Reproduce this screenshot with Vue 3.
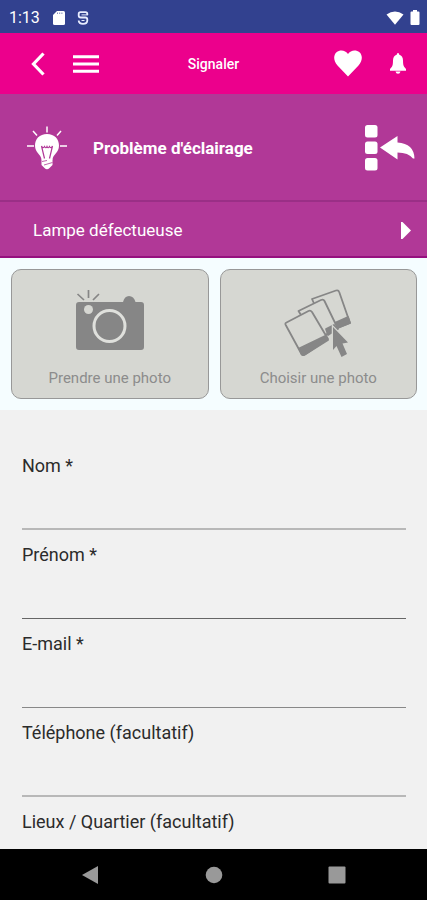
<script setup>
import { reactive } from 'vue'

const fields = [
  { id: 'nom', label: 'Nom *', type: 'text', tone: 'soft' },
  { id: 'prenom', label: 'Prénom *', type: 'text', tone: 'strong' },
  { id: 'email', label: 'E-mail *', type: 'email', tone: 'medium' },
  { id: 'telephone', label: 'Téléphone (facultatif)', type: 'tel', tone: 'soft' },
  { id: 'lieu', label: 'Lieux / Quartier (facultatif)', type: 'text', tone: 'strong' },
]

const values = reactive({ nom: '', prenom: '', email: '', telephone: '', lieu: '' })
</script>

<template>
  <div class="screen">
    <div class="status">
      <span class="clock">1:13</span>
      <svg class="sd" width="12" height="14" viewBox="0 0 12 14">
        <path d="M4 0H10.500Q12 0 12 1.500V12.500Q12 14 10.500 14H1.500Q0 14 0 12.500V4Z" fill="#fff" />
        <path d="M4.500 1.500V3M6.700 1.500V3M8.900 1.500V3" stroke="#32418f" stroke-width="1" opacity=".6" />
      </svg>
      <svg class="sync" width="12" height="14" viewBox="0 0 12 14">
        <path d="M10.300 4V3Q10.300 1.200 8.500 1.200H3.500Q1.700 1.200 1.700 3V4.500Q1.700 6.500 3.700 6.500H8.300Q10.300 6.500 10.300 8.500V9.500Q10.300 12.800 6 12.800Q1.700 12.800 1.700 9.500" fill="none" stroke="#e9edff" stroke-width="1.800" />
        <path d="M4.500 9.500H7.500M4.500 3.900H11" stroke="#e9edff" stroke-width="1" />
      </svg>
      <span class="spacer"></span>
      <svg class="wifi" width="18" height="14" viewBox="0 0 18 14">
        <path d="M.500 3.500Q9-2.500 17.500 3.500L9 13.800Z" fill="#fff" />
      </svg>
      <svg width="10" height="15" viewBox="0 0 10 15">
        <path d="M3 0H7V1.500H8.500Q9.500 1.500 9.500 2.500V14Q9.500 15 8.500 15H1.500Q.500 15 .500 14V2.500Q.500 1.500 1.500 1.500H3Z" fill="#fff" />
      </svg>
    </div>

    <header class="bar">
      <div class="side start">
        <button class="icon-btn" type="button" aria-label="Retour">
          <svg width="14" height="24" viewBox="0 0 14 24">
            <path d="M12.500 1.500L2.500 12L12.500 22.500" fill="none" stroke="#fff" stroke-width="3.200" />
          </svg>
        </button>
        <button class="icon-btn" type="button" aria-label="Menu">
          <svg width="26" height="18" viewBox="0 0 26 18">
            <path d="M0 1.700H26M0 9H26M0 16.300H26" stroke="#fff" stroke-width="3" />
          </svg>
        </button>
      </div>
      <h1 class="title">Signaler</h1>
      <div class="side end">
        <button class="icon-btn" type="button" aria-label="Favoris">
          <svg width="28" height="27" viewBox="0 0 28 27">
            <path d="M14 26.500L3.500 15.500C-1 10.500-.500 5 2.500 2.300C6-.800 11.500 0 14 4C16.500 0 22-.800 25.500 2.300C28.500 5 29 10.500 24.500 15.500Z" fill="#fff" />
          </svg>
        </button>
        <button class="icon-btn" type="button" aria-label="Notifications">
          <svg width="16" height="21" viewBox="0 0 16 21">
            <path d="M8 0Q9.200 0 9.300 1.700Q13 2.700 13 7.500Q13 12.500 14.300 14L16 16V17.700H0V16L1.700 14Q3 12.500 3 7.500Q3 2.700 6.700 1.700Q6.800 0 8 0ZM5.500 18.500H10.500Q10 20.800 8 20.800Q6 20.800 5.500 18.500Z" fill="#fff" />
          </svg>
        </button>
      </div>
    </header>

    <section class="category">
      <svg class="bulb" width="40" height="44" viewBox="0 0 40 44">
        <path d="M20 .500V6.500M6 5L10 9.500M34 5L30 9.500M0 20H7M33 20H40" stroke="#fff" stroke-width="1.500" />
        <path d="M20 8C12.500 8 8 13 8 19.500C8 27 14 28 14.500 33.500H25.500C26 28 32 27 32 19.500C32 13 27.500 8 20 8Z" fill="#fff" />
        <path d="M14.500 20L17.500 32.500M25.500 20L22.500 32.500M14.500 20Q16 23 17.500 20.500Q19 23 20 20.500Q21 23 22.500 20.500Q24 23 25.500 20" fill="none" stroke="#b13897" stroke-width="1.200" />
        <path d="M14.500 33H25.500V39L22.500 42Q20 44.500 17.500 42L14.500 39Z" fill="#fff" />
        <path d="M15 35.500L20 34.500M17 39L25.500 36.500" stroke="#b13897" stroke-width=".8" />
      </svg>
      <h2 class="category-name">Problème d'éclairage</h2>
      <button class="icon-btn" type="button" aria-label="Changer de catégorie">
        <svg width="50" height="46" viewBox="0 0 50 46">
          <g fill="#fff">
            <rect x="0" y="0" width="12.500" height="12.500" rx="2.500" />
            <rect x="0" y="16.500" width="12.500" height="12.500" rx="2.500" />
            <rect x="0" y="33" width="12.500" height="12.500" rx="2.500" />
            <path d="M15 22.500L32.500 11V17.500Q49 18.500 49.500 33.500H48Q43.500 27.500 32.500 27.500V34.500Z" />
          </g>
        </svg>
      </button>
    </section>

    <button class="problem" type="button">
      <span>Lampe défectueuse</span>
      <svg width="10" height="17" viewBox="0 0 10 17">
        <path d="M0 0H1.500L10 8.500L1.500 17H0Z" fill="#fff" />
      </svg>
    </button>

    <section class="photos">
      <button class="photo" type="button">
        <svg width="68" height="62" viewBox="0 0 68 62">
          <path d="M1.500 5L8 11M12.500 1V9M23 5L17 11" stroke="#868686" stroke-width="1.700" />
          <path d="M3 13H47C48 9 50 7 53 7C56 7 58.500 9 59.500 13H65Q68 13 68 16V58Q68 61 65 61H3Q0 61 0 58V16Q0 13 3 13Z" fill="#868686" />
          <circle cx="12.500" cy="20.500" r="4.500" fill="#d6d7d2" />
          <circle cx="33.500" cy="37" r="15.500" fill="none" stroke="#dfe0dc" stroke-width="3" />
        </svg>
        <span>Prendre une photo</span>
      </button>
      <button class="photo" type="button">
        <svg width="68" height="68" viewBox="0 0 68 68">
          <g stroke="#868686" stroke-width="1.800" stroke-linejoin="round">
            <path d="M28 10L52 1.500Q54.500 .800 55.200 3L66 34L43 43Z" fill="#d6d7d2" />
            <path d="M64 28L66 34L44 43L46 36Z" fill="#868686" />
            <path d="M14.500 22L37 11Q39.500 10 40.500 12L54 40L32 50Z" fill="#d6d7d2" />
            <path d="M42 40L50 36L53 40L44 46Z" fill="#868686" />
            <path d="M2 36.500Q.500 34.500 2.500 33.500L24.500 22Q26.500 21 28 23L44 50L20 66Q18.500 66.500 17.500 65Z" fill="#d6d7d2" />
            <path d="M15 59.500L41 47L44 51L21 65.500Q19 66.500 17.500 65Z" fill="#868686" />
          </g>
          <path d="M49 38L64 53.500L58.500 54.500L63 65L57.500 68L52.500 57L49 61Z" fill="#868686" stroke="#d6d7d2" stroke-width="2.500" paint-order="stroke" />
        </svg>
        <span>Choisir une photo</span>
      </button>
    </section>

    <form class="form" @submit.prevent>
      <div v-for="field in fields" :key="field.id" class="field">
        <label :for="field.id">{{ field.label }}</label>
        <input :id="field.id" v-model="values[field.id]" :type="field.type" :class="field.tone" />
      </div>
    </form>

    <nav class="system">
      <button class="icon-btn" type="button" aria-label="Précédent">
        <svg width="18" height="20" viewBox="0 0 18 20"><path d="M17 1V19L1 10Z" fill="#999" /></svg>
      </button>
      <button class="icon-btn" type="button" aria-label="Accueil">
        <svg width="18" height="18" viewBox="0 0 18 18"><circle cx="9" cy="9" r="8.300" fill="#999" /></svg>
      </button>
      <button class="icon-btn" type="button" aria-label="Applications récentes">
        <svg width="18" height="18" viewBox="0 0 18 18"><rect x=".500" y=".500" width="17" height="17" rx="1" fill="#999" /></svg>
      </button>
    </nav>
  </div>
</template>

<style>
body {
  margin: 0;
  background: #f1f1f1;
}
</style>

<style scoped>
* {
  box-sizing: border-box;
}

.screen {
  display: flex;
  flex-direction: column;
  height: 100vh;
  font-family: Roboto, "Liberation Sans", sans-serif;
  background: #f1f1f1;
}

button {
  border: 0;
  padding: 0;
  font: inherit;
  background: none;
  cursor: pointer;
}

svg {
  display: block;
  flex: none;
}

.icon-btn {
  display: flex;
  flex: none;
}

.status {
  display: flex;
  flex: none;
  align-items: center;
  height: 33px;
  padding: 2px 7px 0 9px;
  color: #fff;
  background: #32418f;
}

.clock {
  font-size: 16px;
  line-height: 20px;
}

.sd {
  margin-left: 13px;
}

.sync {
  margin-left: 12px;
}

.spacer {
  flex: 1;
}

.wifi {
  margin-right: 6px;
}

.bar {
  display: grid;
  flex: none;
  grid-template-columns: 1fr auto 1fr;
  align-items: center;
  height: 61px;
  background: #ec008c;
}

.side {
  display: flex;
  align-items: center;
  gap: 28px;
}

.start {
  padding-left: 31px;
}

.end {
  justify-content: flex-end;
  padding-right: 21px;
}

.title {
  margin: 0;
  font-size: 14px;
  font-weight: 500;
  line-height: 20px;
  color: #fff;
}

.category {
  display: flex;
  flex: none;
  align-items: center;
  height: 108px;
  padding: 2px 12px 0 27px;
  border-bottom: 2px solid #9a2f86;
  background: #b13897;
}

.category-name {
  flex: 1;
  margin: 0 0 0 26px;
  font-size: 17px;
  font-weight: 700;
  line-height: 24px;
  color: #fff;
}

.problem {
  display: flex;
  flex: none;
  align-items: center;
  justify-content: space-between;
  height: 56px;
  padding: 2px 16px 0 33px;
  border-bottom: 2px solid #96107f;
  font-size: 17px;
  line-height: 24px;
  color: #fff;
  background: #b13897;
}

.photos {
  display: grid;
  flex: none;
  grid-template-columns: 1fr 1fr;
  gap: 11px;
  padding: 11px 10px 11px 11px;
  background: #f5fdff;
}

.photo {
  display: flex;
  flex-direction: column;
  align-items: center;
  justify-content: space-between;
  height: 130px;
  padding: 19px 0 10px;
  border: 1px solid #989898;
  border-radius: 10px;
  font-size: 15px;
  line-height: 20px;
  color: #8c8c8c;
  background: #d6d7d2;
}

.form {
  flex: 1;
  min-height: 0;
  padding: 44px 21px 0 22px;
  overflow-y: auto;
  scrollbar-width: none;
}

.field {
  display: flex;
  flex-direction: column;
  margin-bottom: 13px;
}

.field label {
  font-size: 18px;
  line-height: 24px;
  color: #2b2b2b;
}

.field input {
  width: 100%;
  height: 52px;
  padding: 8px 0;
  border: 0;
  border-bottom: 1px solid #666;
  border-radius: 0;
  outline: none;
  font: inherit;
  font-size: 18px;
  background: none;
}

.field .medium {
  border-bottom-color: #888;
}

.field .soft {
  border-bottom: 2px solid #b8b8b8;
}

.system {
  display: flex;
  flex: none;
  align-items: center;
  justify-content: space-between;
  height: 51px;
  padding: 0 81px;
  background: #000;
}
</style>
